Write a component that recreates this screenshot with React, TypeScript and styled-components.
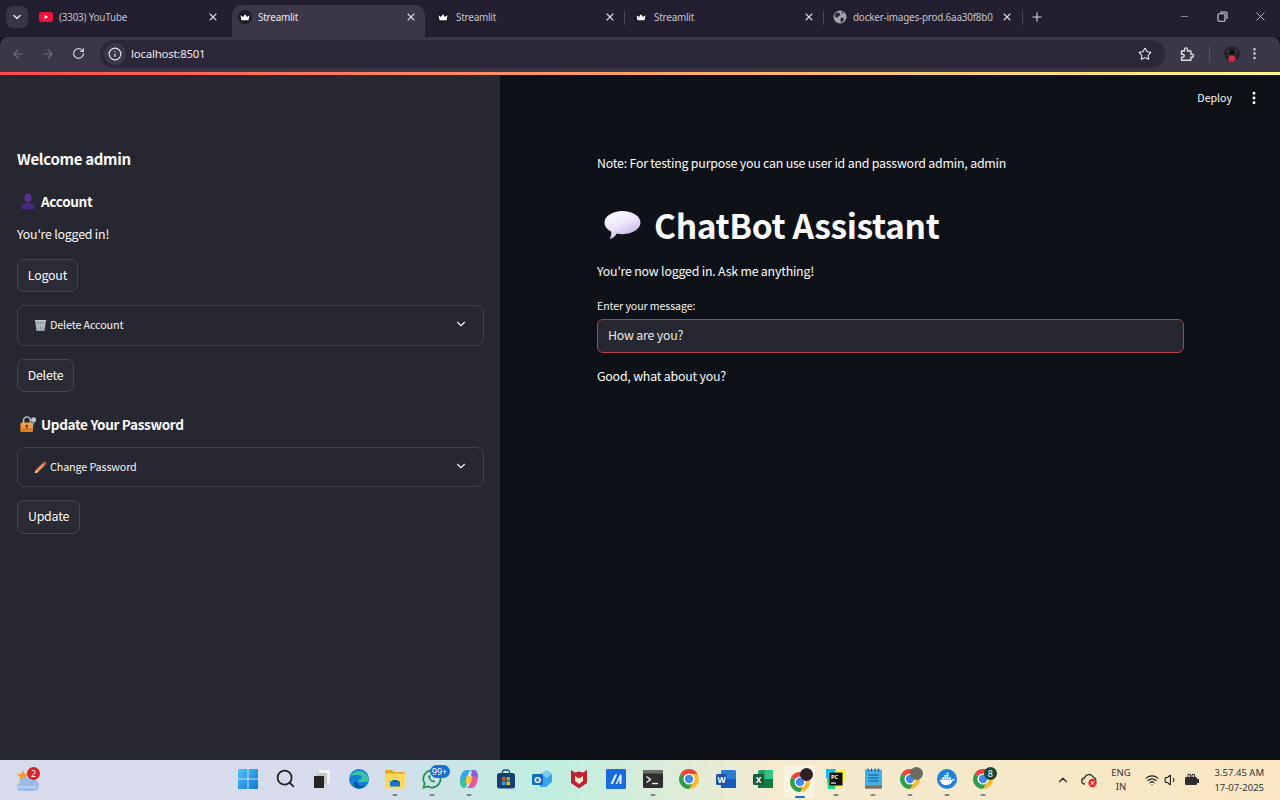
import React from "react";
import styled, { createGlobalStyle } from "styled-components";
import {
  ArrowLeft, ArrowRight, ChevronDown, ChevronUp, EllipsisVertical, Info, Minus, Plus,
  RotateCw, Search, Star, Volume1, Wifi, X,
} from "lucide-react";

const Global = createGlobalStyle`
  html, body { margin: 0; padding: 0; height: 100%; overflow: hidden; background: #0e1117; }
  body { font-family: "Noto Sans CJK SC", "Source Sans Pro", "Noto Sans", sans-serif; }
  * { box-sizing: border-box; }
`;
const CHROME_FONT = `"Noto Sans", "Open Sans", sans-serif`;

const Page = styled.div`
  width: 1280px; height: 800px; display: flex; flex-direction: column; overflow: hidden;
`;
/* browser chrome */
const TabStrip = styled.div`
  height: 37px; flex: none; background: #231e30; display: flex; align-items: flex-end;
  padding-left: 6px; position: relative;
`;
const TabMenu = styled.div`
  width: 22px; height: 22px; margin: 0 4px 9px 0; border-radius: 7px; background: #3b3647; color: #e6e3ec;
  display: flex; align-items: center; justify-content: center;
`;
const Tab = styled.div<{ $active?: boolean; $w: number; $sep?: boolean; $pl: number; $pr: number }>`
  width: ${p => p.$w}px; height: 32px; flex: none; display: flex; align-items: center;
  padding: 0 ${p => p.$pr}px 8px ${p => p.$pl}px;
  font-family: ${CHROME_FONT}; font-size: 9.9px; letter-spacing: -0.2px;
  color: ${p => (p.$active ? "#ece9f1" : "#c7c3cf")};
  background: ${p => (p.$active ? "#3c3748" : "transparent")};
  border-radius: 10px 10px 0 0; position: relative;
  ${p => p.$sep ? `&::after { content: ""; position: absolute; right: 0; top: 6px; height: 14px; width: 1px; background: #4a4557; }` : ""}
`;
const TabIcon = styled.span`
  width: 16px; height: 16px; display: flex; align-items: center; justify-content: center; margin-right: 5px; flex: none;
`;
const TabTitle = styled.span`
  flex: 1; overflow: hidden; white-space: nowrap; margin-right: 8px;
`;
const TabClose = styled(X)`
  flex: none; color: #dedbe4;
`;
const NewTab = styled.div`
  width: 24px; height: 22px; margin: 0 0 9px 2px; color: #d8d5df; display: flex; align-items: center; justify-content: center;
`;
const WindowControls = styled.div`
  margin-left: auto; display: flex; height: 33px; align-self: flex-start; color: #d8d5df;
`;
const WinButton = styled.div<{ $w: number }>`
  width: ${p => p.$w}px; display: flex; align-items: center; justify-content: center; font-size: 0;
`;
const Toolbar = styled.div`
  height: 35px; flex: none; background: #3c3748; display: flex; align-items: center; padding: 0 0 2px 0;
  border-radius: 8px 8px 0 0; color: #d3d0da;
`;
const NavButton = styled.div<{ $dim?: boolean; $w: number }>`
  width: ${p => p.$w}px; height: 28px; flex: none; display: flex; align-items: center; justify-content: center;
  color: ${p => (p.$dim ? "#736e7e" : "#d8d5df")};
`;
const Omnibox = styled.div`
  width: 1065px; height: 28px; flex: none; margin: 0 0 0 4px; background: #2b2638; border-radius: 14px;
  display: flex; align-items: center; padding: 0 13px 0 4px; font-family: ${CHROME_FONT};
  font-size: 11.4px; letter-spacing: -0.2px; color: #ece9f1;
`;
const InfoBubble = styled.span`
  width: 22px; height: 22px; border-radius: 50%; background: #3c3748; display: flex; align-items: center; justify-content: center; margin-right: 5px;
`;
const OmniText = styled.span`flex: 1; padding-bottom: 1px;`;
const ToolSep = styled.div`
  width: 1px; height: 16px; background: #575262; margin: 0 10px 0 0;
`;
const GradientLine = styled.div`
  height: 3px; flex: none; background: linear-gradient(90deg, #ff4b4b, #fffd80);
`;
/* app */
const AppArea = styled.div`
  flex: 1; min-height: 0; display: flex; color: #fafafa;
`;
const Sidebar = styled.aside`
  width: 500px; flex: none; background: #262730; padding: 72px 16px 0 17px; display: flex; flex-direction: column; align-items: flex-start;
`;
const SideTitle = styled.div`
  font-size: 15px; letter-spacing: -0.3px; font-weight: 600; line-height: 24px; height: 24px;
`;
const SideHeading = styled.div<{ $mt: number }>`
  margin-top: ${p => p.$mt}px; display: flex; align-items: center; gap: 4px; font-size: 13.6px; letter-spacing: -0.36px; font-weight: 600; line-height: 24px; height: 24px;
`;
const EmojiBox = styled.span`
  width: 18px; height: 18px; display: flex; align-items: center; justify-content: center; margin-left: 2px; flex: none;
`;
const SideText = styled.div`
  margin-top: 9px; font-size: 12.4px; letter-spacing: -0.22px; line-height: 24px; height: 24px;
`;
const Btn = styled.div<{ $w: number; $h?: number }>`
  margin-top: 13px; width: ${p => p.$w}px; height: ${p => p.$h ?? 33}px; border: 1px solid #45464f; border-radius: 7px; padding-bottom: 2px;
  display: flex; align-items: center; justify-content: center; font-size: 12.4px; letter-spacing: -0.22px; color: #fafafa; background: #2a2b34; flex: none;
`;
const Expander = styled.div<{ $mt: number; $h: number }>`
  margin-top: ${p => p.$mt}px; width: 467px; height: ${p => p.$h}px; border: 1px solid #41424b; border-radius: 8px; flex: none;
  display: flex; align-items: center; padding: 0 15px 0 16px; font-size: 10.8px; letter-spacing: -0.15px; gap: 3px; color: #f3f3f4;
`;
const ExpIcon = styled.span`
  width: 13px; height: 13px; display: flex; align-items: center; justify-content: center; flex: none;
`;
const ExpLabel = styled.span`flex: 1; padding-bottom: 3px;`;
const ExpChevron = styled(ChevronDown)`
  flex: none; margin-bottom: 3px;
`;
const Main = styled.main`
  flex: 1; min-width: 0; background: #0e1117; display: flex; flex-direction: column;
`;
const TopBar = styled.div`
  height: 46px; flex: none; display: flex; align-items: center; justify-content: flex-end; padding: 0 18px 0 0; gap: 14px;
  font-size: 10.6px; color: #fafafa;
`;
const DeployLabel = styled.span`padding-bottom: 2px;`;
const Content = styled.div`
  padding: 30px 96px 0 97px; display: flex; flex-direction: column;
`;
const Para = styled.div<{ $mt?: number }>`
  margin-top: ${p => p.$mt ?? 0}px; font-size: 12.4px; letter-spacing: -0.22px; line-height: 24px; height: 24px;
`;
const Title = styled.h1`
  margin: 29px 0 0; height: 42px; font-size: 33.6px; letter-spacing: -0.38px; font-weight: 700; line-height: 42px; display: flex; align-items: center; gap: 13px; padding-left: 7px;
`;
const FieldLabel = styled.label`
  margin-top: 15px; display: block; height: 16px; font-size: 10.6px; letter-spacing: -0.08px; line-height: 16px; color: #f3f3f4;
`;
const Input = styled.div`
  margin-top: 5px; height: 34px; border: 1px solid #b5404a; border-radius: 6px; background: #262730; display: flex; align-items: center; padding: 0 10px 2px; font-size: 12.4px; letter-spacing: -0.22px; color: #e9e9ea;
`;
/* taskbar */
const Taskbar = styled.footer`
  height: 40px; flex: none; display: flex; align-items: center; color: #222;
  background: linear-gradient(90deg, #d8dbec 0%, #d6dcec 28%, #bfeee0 43%, #f3ead0 60%, #f9e6c2 100%);
`;
const Weather = styled.div`
  width: 230px; height: 40px; flex: none; padding: 7px 0 0 15px; display: flex; position: relative;
`;
const TaskItem = styled.div<{ $active?: boolean }>`
  width: 36.75px; height: 40px; flex: none; display: flex; align-items: center; justify-content: center; position: relative; padding-bottom: 3px;
  ${p => p.$active ? "background: linear-gradient(#fbf3e0, #fbf3e0) center / 31px 100% no-repeat; height: 33px; margin-top: 3px; padding-bottom: 0;" : ""}
`;
const RunDot = styled.span<{ $active?: boolean }>`
  position: absolute; left: 50%; transform: translateX(-50%); bottom: ${p => p.$active ? 0 : 4}px;
  width: ${p => p.$active ? 10 : 5}px; height: 2px; border-radius: 1px; background: ${p => p.$active ? "#1874c4" : "#858585"};
`;
const Badge = styled.span<{ $bg: string; $r?: number; $t?: number; $w?: number }>`
  position: absolute; right: ${p => p.$r ?? 0}px; top: ${p => p.$t ?? 0}px; min-width: ${p => p.$w ?? 13}px; height: 13px; padding: 0 2px; border-radius: 7px;
  background: ${p => p.$bg}; color: #fff; font: 9px/13px "Noto Sans", sans-serif; text-align: center;
`;
const Tray = styled.div`
  margin-left: auto; display: flex; align-items: center; height: 40px; padding-right: 16px; color: #262626; font-family: ${CHROME_FONT};
`;
const TrayBox = styled.span<{ $w: number }>`
  width: ${p => p.$w}px; display: flex; align-items: center; justify-content: center; flex: none;
`;
const Lang = styled.div`
  width: 32px; text-align: center; font-size: 9.5px; line-height: 14px; color: #333; margin: 0 6px 0 0;
`;
const Clock = styled.div`
  width: 61px; text-align: right; font-size: 9.5px; line-height: 15px; color: #333;
`;

const Crown = () => (
  <svg width="14" height="14" viewBox="0 0 14 14">
    <circle cx="7" cy="7" r="7" fill="#1e1b28" />
    <path d="M2.5 5.2 5 7l2-2.8L9 7l2.500-1.800-1 5h-7z" fill="#fff" />
  </svg>
);
const YouTube = () => (
  <svg width="14" height="10" viewBox="0 0 14 10">
    <rect width="14" height="10" rx="2.600" fill="#f0103a" />
    <path d="M5.600 2.900v4.200L9.200 5z" fill="#fff" />
  </svg>
);
const Globe = () => (
  <svg width="14" height="14" viewBox="0 0 14 14">
    <circle cx="7" cy="7" r="6.500" fill="#a6a3ad" />
    <path d="M3 2.600 6.500 3l1 2-2 1.400L3.600 8 1.400 6zM8 7.500l3.200.6-.8 3-2.300 1.600-.8-3zM8.500 1.200 11 3l-2 .8z" fill="#2f2a3b" />
  </svg>
);
const Restore = () => (
  <svg width="11" height="11" viewBox="0 0 11 11" fill="none" stroke="currentColor" strokeWidth="1.100">
    <rect x="1" y="2.800" width="7" height="7.400" rx="1" />
    <path d="M3 1h5.500A1.500 1.500 0 0 1 10 2.500V8" />
  </svg>
);
const Puzzle = () => (
  <svg width="16" height="16" viewBox="0 0 16 16" fill="none" stroke="#dedbe4" strokeWidth="1.400" strokeLinejoin="round">
    <path d="M2.500 5h3V3.400a1.500 1.500 0 0 1 3 0V5h3.400v3.200h1.200a1.500 1.500 0 0 1 0 3h-1.200v3H2.500v-3h1.200a1.500 1.500 0 0 0 0-3H2.500z" />
  </svg>
);
const Avatar = () => (
  <svg width="16" height="16" viewBox="0 0 16 16">
    <circle cx="8" cy="8" r="8" fill="#28242a" />
    <path d="M5 9.500h5.500l1.400 4.600A8 8 0 0 1 8 16a8 8 0 0 1-3.600-1z" fill="#d02c45" />
    <circle cx="8" cy="6" r="2.600" fill="#141216" />
    <path d="M3 5.500 4 3.600 4.600 6zM11 3l1.500 2-1.200.7z" fill="#5f6d5f" />
  </svg>
);
const Bust = () => (
  <svg width="16" height="16" viewBox="0 0 16 16">
    <ellipse cx="8" cy="5" rx="3.600" ry="4.400" fill="#5a2e91" />
    <path d="M1 16c0-3.600 3-5.400 5.600-6h2.800c2.600.6 5.600 2.400 5.600 6z" fill="#4c2683" />
  </svg>
);
const Basket = () => (
  <svg width="13" height="13" viewBox="0 0 13 13">
    <path d="M1 1.500h11L10.600 12H2.400z" fill="#8f96a3" />
    <path d="M2.800 3 4 11.500M5.200 3l.3 8.500M7.800 3l-.3 8.500M10.200 3 9 11.500M1.600 5l9.900 3M11.400 5 1.900 8" stroke="#d0d3da" strokeWidth=".6" fill="none" />
    <rect x=".8" y="1" width="11.400" height="1.400" rx=".4" fill="#c7cbd3" />
  </svg>
);
const Pencil = () => (
  <svg width="13" height="13" viewBox="0 0 13 13">
    <path d="M.8 12.200 1.800 9l7-7 2.200 2.200-7 7z" fill="#ef8c55" />
    <path d="M.8 12.200 1.800 9l2.200 2.200z" fill="#f4d7b2" />
    <path d="M8.800 2 10 .8a1 1 0 0 1 1.300 0l.9.9a1 1 0 0 1 0 1.300L11 4.200z" fill="#e2574c" />
  </svg>
);
const LockKey = () => (
  <svg width="18" height="18" viewBox="0 0 18 18">
    <path d="M4.500 8V5.500a3.500 3.500 0 0 1 7 0V8" fill="none" stroke="#b9bcc4" strokeWidth="1.600" />
    <rect x="1.500" y="7.500" width="12.500" height="9.500" rx="1.800" fill="#f2a03d" />
    <rect x="1.500" y="13" width="12.500" height="4" rx="1.600" fill="#dc7f26" />
    <circle cx="7.700" cy="11" r="1.300" fill="#5a3410" /><rect x="7.200" y="11" width="1" height="3" fill="#5a3410" />
    <circle cx="14.600" cy="4.800" r="2.500" fill="#bfc3cb" />
    <path d="m14 6.500-1.600 5.400 1.200.8 1.800-5.800z" fill="#a3a8b2" />
  </svg>
);
const Balloon = () => (
  <svg width="37" height="30" viewBox="0 0 37 30">
    <defs>
      <linearGradient id="bal" x1="0.1" y1="0" x2="0.7" y2="1">
        <stop offset="0" stopColor="#ffffff" /><stop offset=".5" stopColor="#eee6fb" /><stop offset="1" stopColor="#bfaae6" />
      </linearGradient>
    </defs>
    <path d="M18.500 1C28.400 1 36.500 6.200 36.500 12.600S28.400 24.200 18.500 24.200c-2 0-3.900-.2-5.700-.6C11.600 26 9 28.600 5.600 29c1.400-2.200 1.900-4.600 1.700-7.300C3 19.600.5 16.300.5 12.600.5 6.200 8.600 1 18.500 1z" fill="url(#bal)" />
  </svg>
);

const WinLogo = () => (
  <svg width="20" height="20" viewBox="0 0 20 20">
    <defs><linearGradient id="wl" x1="0" y1="0" x2="1" y2="1"><stop offset="0" stopColor="#4cc3f4" /><stop offset="1" stopColor="#0f78d4" /></linearGradient></defs>
    <path d="M0 0h9.500v9.500H0zM10.500 0H20v9.500h-9.500zM0 10.500h9.500V20H0zM10.500 10.500H20V20h-9.500z" fill="url(#wl)" />
  </svg>
);
const TaskView = () => (
  <svg width="16" height="18" viewBox="0 0 16 18">
    <rect x="5" y="0" width="11" height="13" fill="#f3f3f3" />
    <rect x="3" y="3" width="10" height="11" fill="#c7c7c7" />
    <rect x="0" y="6" width="10" height="12" fill="#252525" />
  </svg>
);
const Edge = () => (
  <svg width="20" height="20" viewBox="0 0 20 20">
    <circle cx="10" cy="10" r="10" fill="#1480d8" />
    <path d="M1 8C3 2 13-1 18 6c2 3 2 7-1 7H9c0-3 4-3 4-5-2-3-9-3-12 0z" fill="#37c6a0" />
    <path d="M8 12c0 4 4 6 9 4-2 3-8 5-11 2-2-2-2-5 2-6z" fill="#0c59a4" />
  </svg>
);
const Folder = () => (
  <svg width="20" height="20" viewBox="0 0 20 20">
    <path d="M0 2.500C0 1.700.6 1 1.400 1H7l2 2h9.600c.8 0 1.400.6 1.400 1.400V6H0z" fill="#e3a71f" />
    <rect y="4.500" width="20" height="15" rx="1" fill="#fbd75b" />
    <rect x="5" y="12" width="10" height="5.500" rx="1" fill="#1277c9" />
    <rect x="7.500" y="11" width="5" height="2" fill="#0a5da3" />
  </svg>
);
const WhatsApp = () => (
  <svg width="20" height="20" viewBox="0 0 20 20" fill="none">
    <path d="M10 1.300a8.600 8.600 0 0 0-7.400 13L1.500 18.600l4.400-1.100A8.600 8.600 0 1 0 10 1.300z" stroke="#1c8f4e" strokeWidth="1.700" />
    <path d="M7 5.800c-1.400 1-1 3.300.8 5.300s4 2.900 5.500 1.700l-1.700-1.800-1.200.6c-1-.5-1.900-1.500-2.300-2.500l.8-1.100z" fill="#1c8f4e" />
  </svg>
);
const Copilot = () => (
  <svg width="20" height="20" viewBox="0 0 20 20">
    <path d="M7 1h5C9 3 8 8 8 13c0 3-1 6-3 6-3 0-4-4-4-7C1 6 4 1 7 1z" fill="#35a9e8" />
    <path d="M13 19H8c3-2 4-7 4-12 0-3 1-6 3-6 3 0 4 4 4 7 0 6-3 11-6 11z" fill="#e65aa0" />
    <path d="M7.500 7h5.500L12 14H6.500z" fill="#f7c843" />
    <path d="M12 1h3c2 0 4 3 4 7l-6-1c0-3-.2-5-1-6z" fill="#8b61d8" />
    <path d="M1 12l6-1c0 4-.5 7-2 8-2 0-4-3-4-7z" fill="#3fc88a" />
  </svg>
);
const Store = () => (
  <svg width="20" height="20" viewBox="0 0 20 20">
    <path d="M6.500 4V3a2 2 0 0 1 2-2h3a2 2 0 0 1 2 2v1" fill="none" stroke="#1c4a7e" strokeWidth="1.300" />
    <rect x="1" y="4" width="18" height="15.500" rx="2.500" fill="#16406f" />
    <rect x="6" y="8" width="3.500" height="3.500" fill="#e8532b" /><rect x="10.500" y="8" width="3.500" height="3.500" fill="#7cbb2f" />
    <rect x="6" y="12.500" width="3.500" height="3.500" fill="#2ba4ea" /><rect x="10.500" y="12.500" width="3.500" height="3.500" fill="#f8b81f" />
  </svg>
);
const Outlook = () => (
  <svg width="20" height="20" viewBox="0 0 20 20">
    <path d="M8 5 15 1.500 20 5v8l-6 5H8z" fill="#36a5e8" />
    <path d="M9 5l5-3.500L20 5l-5 4z" fill="#76cdf4" />
    <rect x="0" y="5" width="11" height="11" rx="1.500" fill="#0f6cbd" />
    <text x="5.500" y="13.700" textAnchor="middle" fontSize="9" fontWeight="700" fill="#fff" fontFamily="Noto Sans, sans-serif">O</text>
  </svg>
);
const McAfee = () => (
  <svg width="18" height="20" viewBox="0 0 18 20">
    <path d="M1 1l4 2.500 4-1 4 1L17 1v13l-8 5.500L1 14z" fill="#bf2236" />
    <path d="M5 7l4 2.500L13 7v5l-4 3-4-3z" fill="#f6ead0" />
  </svg>
);
const Mattermost = () => (
  <svg width="20" height="20" viewBox="0 0 20 20">
    <rect width="20" height="20" rx="1" fill="#1a6be0" />
    <path d="M4.500 15 9 5.500h2.200L6.800 15zM9.500 15 14 5.500h1.500V15h-2v-5l-2.300 5z" fill="#eaf2ff" />
  </svg>
);
const Terminal = () => (
  <svg width="20" height="18" viewBox="0 0 20 18">
    <rect width="20" height="18" rx="1.500" fill="#2f2f2f" />
    <rect width="20" height="3.500" fill="#6d6d6d" />
    <path d="m3.500 6.500 4 3-4 3" fill="none" stroke="#f2f2f2" strokeWidth="1.400" />
    <path d="M9 13.500h6" stroke="#f2f2f2" strokeWidth="1.400" />
  </svg>
);
const Chrome = ({ s = 20 }: { s?: number }) => (
  <svg width={s} height={s} viewBox="2 2 20 20">
    <path d="M3.340 7A10 10 0 0 1 20.660 7H12a5 5 0 0 0-4.330 2.500z" fill="#e8453c" />
    <path d="M20.660 7A10 10 0 0 1 12 22l4.330-7.500A5 5 0 0 0 12 7z" fill="#f9bb2d" />
    <path d="M3.340 7A10 10 0 0 0 12 22l4.330-7.500a5 5 0 0 1-8.660-5z" fill="#2f9e48" />
    <circle cx="12" cy="12" r="4.200" fill="#4286f0" />
    <circle cx="12" cy="12" r="5" fill="none" stroke="#fff" strokeWidth="1.100" />
  </svg>
);
const Word = () => (
  <svg width="20" height="20" viewBox="0 0 20 20">
    <rect x="5" y="1" width="15" height="18" rx="1.500" fill="#2b7cd3" />
    <rect x="5" y="10" width="15" height="9" fill="#185abd" />
    <rect x="0" y="5" width="11" height="11" rx="1.500" fill="#1d4fa3" />
    <text x="5.500" y="13.700" textAnchor="middle" fontSize="8.500" fontWeight="700" fill="#fff" fontFamily="Noto Sans, sans-serif">W</text>
  </svg>
);
const Excel = () => (
  <svg width="20" height="20" viewBox="0 0 20 20">
    <rect x="5" y="1" width="15" height="18" rx="1.500" fill="#21a366" />
    <rect x="12" y="1" width="8" height="9" fill="#33c481" />
    <rect x="5" y="10" width="15" height="9" fill="#107c41" />
    <rect x="0" y="5" width="11" height="11" rx="1.500" fill="#185c37" />
    <text x="5.500" y="13.600" textAnchor="middle" fontSize="8.500" fontWeight="700" fill="#fff" fontFamily="Noto Sans, sans-serif">X</text>
  </svg>
);
const PyCharm = () => (
  <svg width="20" height="20" viewBox="0 0 20 20">
    <path d="M0 2 12 0l-3 20H2z" fill="#21d789" />
    <path d="M9 0h11v9l-6 11-5-3z" fill="#fcf84a" />
    <path d="M0 0h10l-3 9H0z" fill="#07c3f2" />
    <rect x="3.500" y="3.500" width="13" height="13" fill="#111" />
    <rect x="5" y="13.500" width="5" height="1.100" fill="#fff" />
    <text x="5" y="10" fontSize="5.500" fontWeight="700" fill="#fff" fontFamily="Noto Sans, sans-serif">PC</text>
  </svg>
);
const Notepad = () => (
  <svg width="17" height="21" viewBox="0 0 17 21">
    <rect y="1.500" width="17" height="19" rx="1.500" fill="#3fb0ea" />
    <rect y="17.500" width="17" height="3" rx="1" fill="#8d6a4a" />
    <path d="M3 .500v3M6.500.500v3M10 .500v3M13.500.500v3" stroke="#35496b" strokeWidth="1.200" />
    <path d="M3.500 7h10M3.500 10h10M3.500 13h10" stroke="#14507a" strokeWidth="1.100" />
  </svg>
);
const Docker = () => (
  <svg width="20" height="20" viewBox="0 0 20 20">
    <circle cx="10" cy="10" r="10" fill="#1d84d8" />
    <path d="M3 10.500h12.800c.6-.6 1.400-.8 2.200-.5-.5 1.200-1.400 1.700-2.400 1.700-1 2.900-3.400 4.300-6.600 4.300-3.700 0-5.600-2.200-6-5.500z" fill="#fff" />
    <path d="M5 8.200h1.900V10H5zM7.300 8.200h1.900V10H7.300zM9.600 8.200h1.900V10H9.600zM7.300 6h1.900v1.800H7.300zM9.600 6h1.900v1.800H9.600zM9.600 3.800h1.900v1.800H9.600zM11.900 8.200h1.900V10h-1.900z" fill="#fff" />
  </svg>
);
const Cloud = () => (
  <svg width="26" height="26" viewBox="0 0 26 26">
    <path d="M8 3l1.800 3.700 4 .6-2.900 2.800.7 4-3.600-1.900-3.600 1.900.7-4L2.200 7.300l4-.6z" fill="#ef9d3c" />
    <path d="M6 24a4.300 4.300 0 0 1-1-8.400A6 6 0 0 1 16 12.700 5.200 5.200 0 0 1 20 24z" fill="#9dbbe6" />
    <path d="M2 20h19" stroke="#dbe5f5" strokeWidth="1" />
  </svg>
);
const TrayCloud = () => (
  <svg width="17" height="16" viewBox="0 0 17 16">
    <path d="M4 12a3 3 0 0 1-.4-6A4.500 4.500 0 0 1 12 5a3.500 3.500 0 0 1 1 6.500" fill="none" stroke="#333" strokeWidth="1.300" />
    <circle cx="11.500" cy="11" r="4.200" fill="#df2c2c" />
    <path d="m9.800 9.300 3.400 3.400M13.200 9.300l-3.400 3.400" stroke="#fff" strokeWidth="1" />
  </svg>
);
const Battery = () => (
  <svg width="16" height="14" viewBox="0 0 16 14">
    <rect x="1" y="4" width="12" height="8" rx="1.200" fill="#2c2c2c" />
    <rect x="13" y="6" width="2" height="4" fill="#2c2c2c" />
    <path d="M4 4V1.500h2.500V4M8 4V1.500h2.500V4" fill="none" stroke="#2c2c2c" strokeWidth="1" />
  </svg>
);

const tabs: { title: string; w: number; pl: number; pr: number; icon: React.ReactNode; active?: boolean; sep?: boolean }[] = [
  { title: "(3303) YouTube", w: 200, pl: 6, pr: 13, icon: <YouTube /> },
  { title: "Streamlit", w: 193, pl: 5, pr: 8, icon: <Crown />, active: true },
  { title: "Streamlit", w: 200, pl: 10, pr: 9, icon: <Crown />, sep: true },
  { title: "Streamlit", w: 199, pl: 8, pr: 9, icon: <Crown />, sep: true },
  { title: "docker-images-prod.6aa30f8b0", w: 199, pl: 8, pr: 10, icon: <Globe />, sep: true },
];

const taskItems: { el: React.ReactNode; dot?: boolean; active?: boolean; badge?: React.ReactNode }[] = [
  { el: <WinLogo /> },
  { el: <Search size={21} strokeWidth={2} color="#222" /> },
  { el: <TaskView /> },
  { el: <Edge /> },
  { el: <Folder />, dot: true },
  { el: <WhatsApp />, dot: true, badge: <Badge $bg="#1a6fd0" $r={1} $t={5} $w={20}>99+</Badge> },
  { el: <Copilot />, dot: true },
  { el: <Store /> },
  { el: <Outlook /> },
  { el: <McAfee /> },
  { el: <Mattermost /> },
  { el: <Terminal />, dot: true },
  { el: <Chrome /> },
  { el: <Word /> },
  { el: <Excel /> },
  { el: <Chrome />, active: true, dot: true, badge: <Badge $bg="#2a2226" $r={5} $t={3} $w={13} /> },
  { el: <PyCharm />, dot: true },
  { el: <Notepad />, dot: true },
  { el: <Chrome />, dot: true, badge: <Badge $bg="#6b6b63" $r={5} $t={7} $w={13} /> },
  { el: <Docker />, dot: true },
  { el: <Chrome />, dot: true, badge: <Badge $bg="#12493a" $r={5} $t={7} $w={13}>8</Badge> },
];

export default function App() {
  return (
    <Page>
      <Global />
      <TabStrip>
        <TabMenu><ChevronDown size={12} strokeWidth={3} /></TabMenu>
        {tabs.map((t, i) => (
          <Tab key={i} $w={t.w} $pl={t.pl} $pr={t.pr} $active={t.active} $sep={t.sep}>
            <TabIcon>{t.icon}</TabIcon>
            <TabTitle>{t.title}</TabTitle>
            <TabClose size={12} strokeWidth={2.2} />
          </Tab>
        ))}
        <NewTab><Plus size={14} /></NewTab>
        <WindowControls>
          <WinButton $w={38}><Minus size={11} strokeWidth={1.2} /></WinButton>
          <WinButton $w={38}><Restore /></WinButton>
          <WinButton $w={39}><X size={15} strokeWidth={1.3} /></WinButton>
        </WindowControls>
      </TabStrip>
      <Toolbar>
        <NavButton $dim $w={36}><ArrowLeft size={14} /></NavButton>
        <NavButton $dim $w={24}><ArrowRight size={14} /></NavButton>
        <NavButton $w={36}><RotateCw size={13} strokeWidth={2.2} /></NavButton>
        <Omnibox>
          <InfoBubble><Info size={14} /></InfoBubble>
          <OmniText>localhost:8501</OmniText>
          <Star size={14} strokeWidth={1.8} />
        </Omnibox>
        <NavButton $w={44}><Puzzle /></NavButton>
        <ToolSep />
        <NavButton $w={23}><Avatar /></NavButton>
        <NavButton $w={23}><EllipsisVertical size={15} /></NavButton>
      </Toolbar>
      <GradientLine />
      <AppArea>
        <Sidebar>
          <SideTitle>Welcome admin</SideTitle>
          <SideHeading $mt={18}><EmojiBox><Bust /></EmojiBox>Account</SideHeading>
          <SideText>You're logged in!</SideText>
          <Btn $w={61}>Logout</Btn>
          <Expander $mt={13} $h={41}>
            <ExpIcon><Basket /></ExpIcon>
            <ExpLabel>Delete Account</ExpLabel>
            <ExpChevron size={14} strokeWidth={2} />
          </Expander>
          <Btn $w={57}>Delete</Btn>
          <SideHeading $mt={20}><EmojiBox><LockKey /></EmojiBox>Update Your Password</SideHeading>
          <Expander $mt={11} $h={40}>
            <ExpIcon><Pencil /></ExpIcon>
            <ExpLabel>Change Password</ExpLabel>
            <ExpChevron size={14} strokeWidth={2} />
          </Expander>
          <Btn $w={63} $h={34}>Update</Btn>
        </Sidebar>
        <Main>
          <TopBar>
            <DeployLabel>Deploy</DeployLabel>
            <EllipsisVertical size={16} strokeWidth={2.4} />
          </TopBar>
          <Content>
            <Para>Note: For testing purpose you can use user id and password admin, admin</Para>
            <Title><Balloon />ChatBot Assistant</Title>
            <Para $mt={13}>You're now logged in. Ask me anything!</Para>
            <FieldLabel>Enter your message:</FieldLabel>
            <Input>How are you?</Input>
            <Para $mt={11}>Good, what about you?</Para>
          </Content>
        </Main>
      </AppArea>
      <Taskbar>
        <Weather>
          <Cloud />
          <Badge $bg="#d3262c" $r={190} $t={7}>2</Badge>
        </Weather>
        {taskItems.map((it, i) => (
          <TaskItem key={i} $active={it.active}>
            {it.el}
            {it.badge}
            {it.dot && <RunDot $active={it.active} />}
          </TaskItem>
        ))}
        <Tray>
          <TrayBox $w={20}><ChevronUp size={14} strokeWidth={2} /></TrayBox>
          <TrayBox $w={32}><TrayCloud /></TrayBox>
          <Lang>ENG<br />IN</Lang>
          <TrayBox $w={18}><Wifi size={14} /></TrayBox>
          <TrayBox $w={20}><Volume1 size={14} /></TrayBox>
          <TrayBox $w={22}><Battery /></TrayBox>
          <Clock>3.57.45 AM<br />17-07-2025</Clock>
        </Tray>
      </Taskbar>
    </Page>
  );
}
